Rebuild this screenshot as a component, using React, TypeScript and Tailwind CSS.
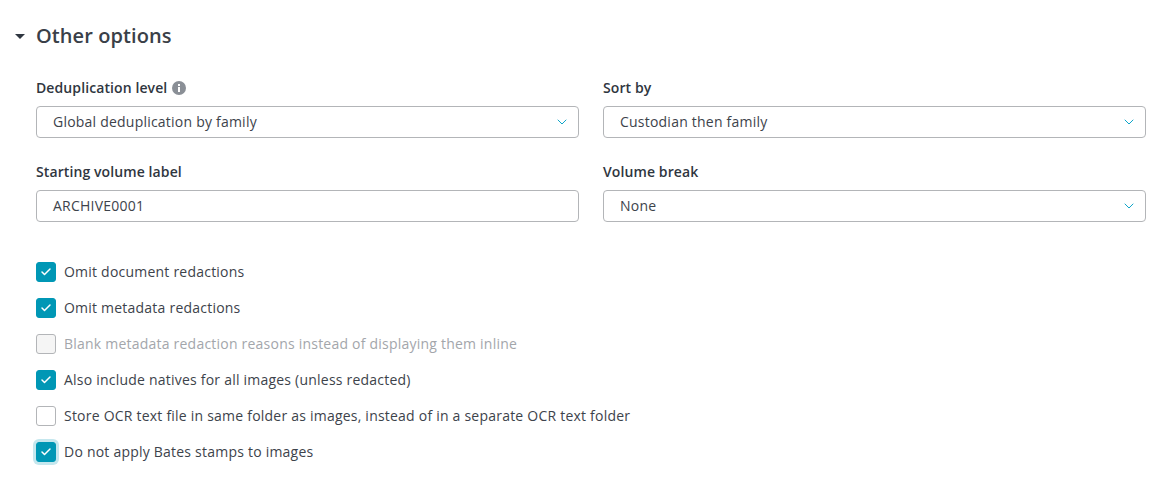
import { ChevronDown, Check } from 'lucide-react'

const FONT = "font-['Open_Sans','Noto_Sans',sans-serif]"

function Field({ label, info, children }: { label: string; info?: boolean; children: React.ReactNode }) {
  return (
    <div>
      <div className="flex h-5 items-center gap-[5px] text-sm font-semibold leading-5 tracking-[0.1px] text-[#2f3640]">
        {label}
        {info && (
          <svg width="14" height="14" viewBox="0 0 14 14">
            <circle cx="7" cy="7" r="7" fill="#8a8f96" />
            <rect x="6" y="6" width="2" height="5" fill="#fff" />
            <rect x="6" y="3" width="2" height="2" fill="#fff" />
          </svg>
        )}
      </div>
      {children}
    </div>
  )
}

function Select({ value }: { value: string }) {
  return (
    <div className="mt-2 flex h-8 items-center justify-between rounded border border-[#b3b5b8] pl-4 pr-2 text-sm tracking-[0.22px] text-[#3d434b]">
      {value}
      <ChevronDown size={16} strokeWidth={1.5} className="text-[#0ea5c9]" />
    </div>
  )
}

interface Option {
  label: string
  checked?: boolean
  disabled?: boolean
  focused?: boolean
}

const OPTIONS: Option[] = [
  { label: 'Omit document redactions', checked: true },
  { label: 'Omit metadata redactions', checked: true },
  { label: 'Blank metadata redaction reasons instead of displaying them inline', disabled: true },
  { label: 'Also include natives for all images (unless redacted)', checked: true },
  { label: 'Store OCR text file in same folder as images, instead of in a separate OCR text folder' },
  { label: 'Do not apply Bates stamps to images', checked: true, focused: true },
]

function OptionRow({ label, checked, disabled, focused }: Option) {
  return (
    <div className="flex h-5 items-center gap-2">
      <span
        className={[
          'flex h-5 w-5 shrink-0 items-center justify-center rounded-[3px] border',
          checked ? 'border-[#0097b5] bg-[#0097b5]' : 'border-[#b3b5b8]',
          disabled ? 'bg-[#f5f5f5]' : '',
          focused ? 'shadow-[0_0_0_3px_#c5e7ee]' : '',
        ].join(' ')}
      >
        {checked && <Check size={12} strokeWidth={3} className="text-white" />}
      </span>
      <span className={`text-sm leading-5 tracking-[0.22px] ${disabled ? 'text-[#a3a6ab]' : 'text-[#3d434b]'}`}>{label}</span>
    </div>
  )
}

export default function App() {
  return (
    <div className={`${FONT} h-[497px] overflow-hidden bg-white pl-[15px] pr-[15px] pt-6`}>
      <div className="flex h-6 items-center">
        <svg width="10" height="5" viewBox="0 0 10 5" className="mr-[11px]">
          <path d="M0 0h10L5 5z" fill="#2f3640" />
        </svg>
        <h2 className="text-xl font-semibold leading-6 tracking-[0.08px] text-[#3a4048]">Other options</h2>
      </div>

      <div className="ml-[21px] mt-[26px] grid grid-cols-2 gap-x-6 gap-y-[24px] pt-1">
        <Field label="Deduplication level" info>
          <Select value="Global deduplication by family" />
        </Field>
        <Field label="Sort by">
          <Select value="Custodian then family" />
        </Field>
        <Field label="Starting volume label">
          <div className="mt-2 flex h-8 items-center rounded border border-[#b3b5b8] pl-4 text-sm tracking-[0.22px] text-[#3d434b]">
            ARCHIVE0001
          </div>
        </Field>
        <Field label="Volume break">
          <Select value="None" />
        </Field>
      </div>

      <div className="ml-[21px] mt-10 flex flex-col gap-4">
        {OPTIONS.map((o) => (
          <OptionRow key={o.label} {...o} />
        ))}
      </div>
    </div>
  )
}
